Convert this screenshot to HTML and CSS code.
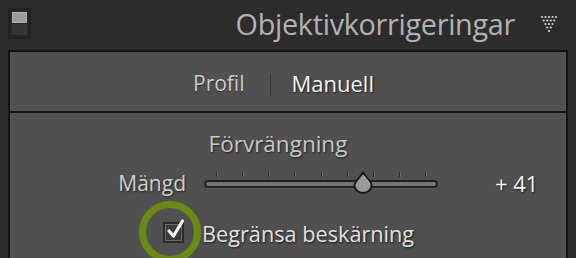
FILE: index.html
```html
<!DOCTYPE html>
<html>
<head>
<meta charset="utf-8">
<link rel="stylesheet" href="styles.css">
</head>
<body>
<header class="head">
  <div class="solo-icon"><span class="solo-top"></span><span class="solo-bot"></span></div>
  <h1 class="title">Objektivkorrigeringar</h1>
  <svg class="tri" width="18" height="22" viewBox="0 0 18 22">
    <g fill="#d8d8d8">
      <circle cx="2" cy="2" r="1.1"/><circle cx="5.5" cy="2" r="1.1"/><circle cx="9" cy="2" r="1.1"/><circle cx="12.5" cy="2" r="1.1"/><circle cx="16" cy="2" r="1.1"/>
      <circle cx="3.75" cy="5.5" r="1.1"/><circle cx="7.25" cy="5.5" r="1.1"/><circle cx="10.75" cy="5.5" r="1.1"/><circle cx="14.25" cy="5.5" r="1.1"/>
      <circle cx="5.5" cy="9" r="1.1"/><circle cx="9" cy="9" r="1.1"/><circle cx="12.5" cy="9" r="1.1"/>
      <circle cx="7.25" cy="12.5" r="1.1"/><circle cx="10.75" cy="12.5" r="1.1"/>
      <circle cx="9" cy="16" r="1.1"/>
    </g>
  </svg>
</header>
<section class="panel">
  <nav class="tabs">
    <span class="tab">Profil</span>
    <span class="divider"></span>
    <span class="tab active">Manuell</span>
  </nav>
  <div class="content">
    <div class="group-title">Förvrängning</div>
    <div class="slider-row">
      <span class="slider-label">Mängd</span>
      <div class="slider">
        <div class="ticks">
          <i></i><i></i><i></i><i></i><i></i><i></i><i></i><i></i><i></i>
        </div>
        <div class="track"></div>
        <svg class="thumb" width="20" height="23" viewBox="0 0 20 23">
          <path d="M10 1.5 C11.5 5 18.5 10 18.5 14.5 A8.5 7.5 0 0 1 1.5 14.5 C1.5 10 8.5 5 10 1.5 Z" fill="#9a9a9a" stroke="#1a1a1a" stroke-width="2"/>
          <path d="M10 4 C11 6.5 16 10 16.5 13" fill="none" stroke="#b8b8b8" stroke-width="1"/>
        </svg>
      </div>
      <span class="slider-value">+ 41</span>
    </div>
    <div class="check-row">
      <span class="ring"></span>
      <span class="checkbox">
        <svg width="22" height="24" viewBox="0 0 22 24">
          <path d="M5 13 L9.5 18 L18.5 3" fill="none" stroke="#f2f2f2" stroke-width="3.2" stroke-linecap="round" stroke-linejoin="round"/>
        </svg>
      </span>
      <span class="check-label">Begränsa beskärning</span>
    </div>
  </div>
</section>
</body>
</html>
```
FILE: styles.css
```css
html, body {
  margin: 0;
  padding: 0;
  background: #2c2c2c;
  width: 576px;
  height: 258px;
  overflow: hidden;
  font-family: "Open Sans", "Liberation Sans", sans-serif;
}

.head {
  height: 50px;
  display: flex;
  align-items: center;
  box-sizing: border-box;
}

.solo-icon {
  margin-left: 8px;
  width: 23px;
  height: 31px;
  box-sizing: border-box;
  border: 2px solid #222;
  background: #262626;
  display: flex;
  flex-direction: column;
  padding: 2px;
  gap: 1px;
  align-self: flex-start;
  margin-top: 8px;
}
.solo-top {
  height: 11px;
  background: #9c9c9c;
  border: 1px solid #b2b2b2;
  box-sizing: border-box;
}
.solo-bot {
  flex: 1;
  background: #363636;
}

.title {
  margin: 0 0 0 auto;
  font-weight: normal;
  font-size: 28.8px;
  color: #b2b2b2;
  letter-spacing: -0.3px;
  line-height: 32px;
  padding-bottom: 3px;
}

.tri {
  margin: 0 18px 0 25px;
  padding-top: 2px;
}

.panel {
  margin-left: 8px;
  width: 560px;
  box-sizing: border-box;
  border: 2px solid #141414;
  border-bottom: none;
  background: #505050;
  height: 208px;
}

.tabs {
  height: 61px;
  display: flex;
  align-items: center;
  justify-content: flex-start;
  border-bottom: 2px solid #151515;
  padding-left: 183px;
  padding-top: 2px;
  box-sizing: border-box;
}
.tab {
  font-size: 21px;
  color: #cdcdcd;
  text-shadow: 0 1px 1px rgba(0,0,0,0.5);
}
.tab.active {
  font-size: 22px;
  color: #f4f4f4;
  text-shadow: 1px 1px 2px rgba(0,0,0,0.7);
}
.divider {
  width: 1px;
  height: 22px;
  background: #3a3a3a;
  margin: 4px 21px 0 25px;
}

.content {
  position: relative;
  padding-top: 17px;
}

.group-title {
  text-align: center;
  font-size: 22.5px;
  color: #c8c8c8;
  line-height: 28px;
  text-shadow: 1px 1px 2px rgba(0,0,0,0.6);
  padding-right: 20px;
}

.slider-row {
  display: flex;
  align-items: center;
  height: 36px;
  margin-top: 7px;
}
.slider-label {
  width: 176px;
  text-align: right;
  font-size: 21px;
  color: #cfcfcf;
  text-shadow: 1px 1px 2px rgba(0,0,0,0.6);
}
.slider {
  position: relative;
  width: 234px;
  height: 24px;
  margin-left: 18px;
}
.ticks {
  position: absolute;
  left: 12px;
  top: 1px;
  width: 210px;
  display: flex;
  justify-content: space-between;
}
.ticks i {
  display: block;
  width: 1px;
  height: 5px;
  background: #2c2c2c;
  box-shadow: 1px 0 0 #6a6a6a;
}
.track {
  position: absolute;
  left: 0;
  right: 0;
  top: 9px;
  height: 8px;
  box-sizing: border-box;
  border: 2px solid #1f1f1f;
  border-radius: 4px;
  background: #747474;
  box-shadow: 0 1px 0 #5e5e5e;
}
.thumb {
  position: absolute;
  left: 149px;
  top: 0;
}
.slider-value {
  margin-left: 57px;
  font-size: 22px;
  color: #f4f4f4;
  text-shadow: 1px 1px 2px rgba(0,0,0,0.7);
}

.check-row {
  position: relative;
  display: flex;
  align-items: center;
  height: 40px;
  margin-top: 12px;
  padding-left: 153px;
}
.ring {
  position: absolute;
  left: 129px;
  top: -12px;
  width: 48px;
  height: 48px;
  border: 7px solid #6a8a14;
  border-radius: 50%;
}
.checkbox {
  position: relative;
  width: 21px;
  height: 21px;
  box-sizing: border-box;
  border: 2px solid #2a2a2a;
  background: #3a3a3a;
  box-shadow: inset 0 0 0 1px #6a6a6a;
  margin-top: -2px;
}
.checkbox svg {
  position: absolute;
  left: -1px;
  top: -6px;
}
.check-label {
  margin-left: 18px;
  font-size: 21.7px;
  color: #e2e2e2;
  text-shadow: 1px 1px 2px rgba(0,0,0,0.7);
}
```
